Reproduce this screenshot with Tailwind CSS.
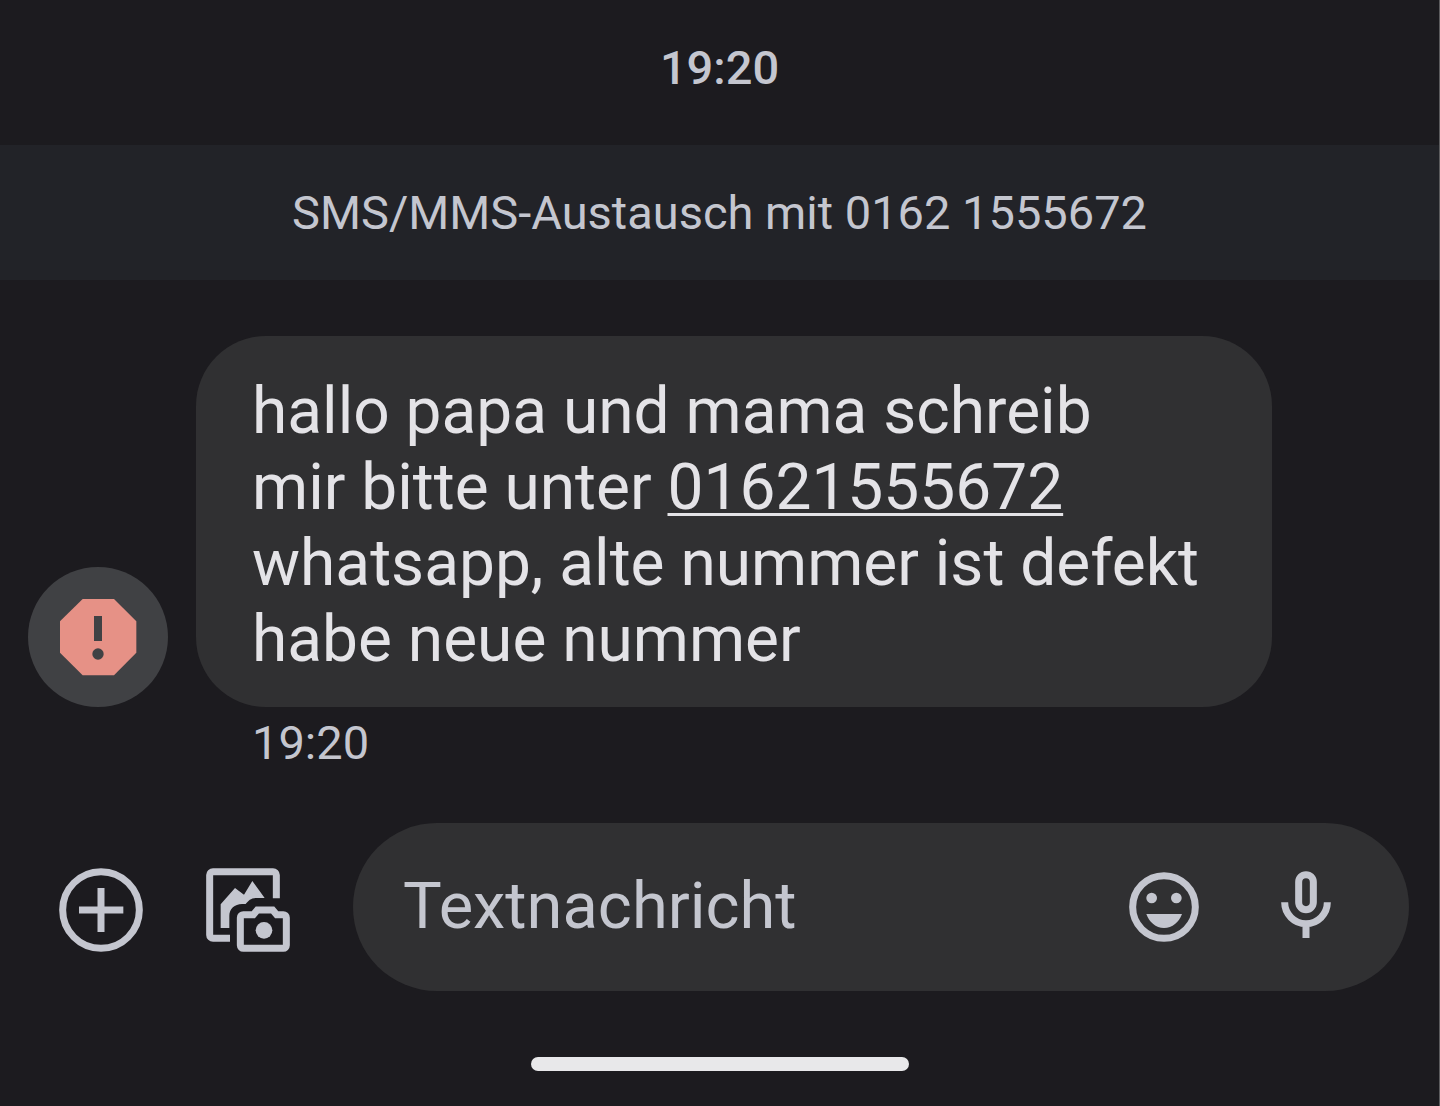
<!DOCTYPE html>
<html lang="de">
<head>
  <meta charset="UTF-8" />
  <meta name="viewport" content="width=device-width, initial-scale=1.0"/>
  <title>Nachrichten</title>
  <script src="https://cdn.jsdelivr.net/npm/@tailwindcss/browser@4"></script>
</head>
<body class="bg-[#1c1b1f] font-['Roboto',sans-serif] text-[#c4c6cf]">

  <div class="min-h-screen flex flex-col border-r border-[#5c5c5e]">

    <header class="pt-10 pb-[49px] text-center">
      <time class="block text-[47px] leading-[56px] font-medium">19:20</time>
    </header>

    <p class="bg-[#222328] pt-10 pb-[39px] text-center text-[47px] leading-[56px]">SMS/MMS-Austausch mit 0162 1555672</p>

    <!-- Conversation -->
    <main class="pt-14 pl-7 pr-[167px]">
      <div class="flex items-end gap-7">
        <div class="size-[140px] shrink-0 rounded-full bg-[#404144] flex items-center justify-center">
          <svg class="size-[84px]" viewBox="0 0 252 252" role="img" aria-label="Spam">
            <path fill="#e69186" d="M80 12H174L241 79V173L174 241H80L12 173V79Z"/>
            <path fill="#404144" d="M114 63h24v75h-24z"/>
            <circle fill="#404144" cx="126" cy="177" r="17"/>
          </svg>
        </div>
        <div class="grow rounded-[70px] bg-[#303032] pt-[38px] pb-[29px] px-14">
          <p class="text-[64px] leading-[76px] text-[#e4e3e7]">
            hallo papa und mama schreib<br>
            mir bitte unter <a href="tel:01621555672" class="underline decoration-3 underline-offset-4 [text-decoration-skip-ink:none]">01621555672</a><br>
            whatsapp, alte nummer ist defekt<br>
            habe neue nummer
          </p>
        </div>
      </div>
      <time class="block pl-[224px] pt-2 text-[47px] leading-[56px]">19:20</time>
    </main>

    <!-- Compose bar -->
    <form class="mt-auto pl-[59px] pr-[30px] flex items-center">
      <button type="button" aria-label="Anhang" class="mt-1.5 mr-[63px] shrink-0">
        <svg class="size-[84px]" viewBox="0 0 252 252" fill="none" stroke="currentColor" stroke-width="21">
          <circle cx="126" cy="126" r="115"/>
          <path d="M60 126H193M126 60V192"/>
        </svg>
      </button>
      <button type="button" aria-label="Galerie und Kamera" class="mt-1.5 mr-[63px] shrink-0">
        <svg class="size-[84px]" viewBox="0 0 252 252" fill="none" stroke="currentColor" stroke-width="21">
          <path d="M211 91V21a10 10 0 0 0-10-10H21a10 10 0 0 0-10 10v180a10 10 0 0 0 10 10h51"/>
          <path fill="currentColor" stroke="none" d="M44 109L87 60L114 80L139 39L176 90H150C133 91 128 98 119 108H108C86 109 70 122 70 144V180H44Z"/>
          <path d="M112 140H142L154 126H200L212 140H232a9 9 0 0 1 9 9V232a9 9 0 0 1-9 9H112a9 9 0 0 1-9-9V149a9 9 0 0 1 9-9Z"/>
          <circle fill="currentColor" stroke="none" cx="174" cy="187" r="25"/>
        </svg>
      </button>
      <div class="grow min-w-0 flex items-center rounded-full bg-[#303032] py-[42px] pl-[50px] pr-[61px]">
        <input type="text" aria-label="Textnachricht" placeholder="Textnachricht" class="grow min-w-0 h-[84px] text-[65px] outline-none placeholder:text-[#c4c6cf]">
        <button type="button" aria-label="Emoji" class="mr-[58px] shrink-0">
          <svg class="size-[84px]" viewBox="0 0 252 252" fill="currentColor">
            <circle cx="126" cy="126" r="94" fill="none" stroke="currentColor" stroke-width="21"/>
            <circle cx="89" cy="99" r="16"/>
            <circle cx="163" cy="99" r="16"/>
            <path d="M73 147H180C171 172 151 189 126 189S82 172 73 147Z"/>
          </svg>
        </button>
        <button type="button" aria-label="Spracheingabe" class="shrink-0">
          <svg class="size-[84px]" viewBox="0 0 252 252" fill="none" stroke="currentColor" stroke-width="21">
            <rect x="104" y="29" width="44" height="105" rx="22"/>
            <path d="M62 112a64 64 0 0 0 128 0M126 175V219"/>
          </svg>
        </button>
      </div>
    </form>

    <!-- Home indicator -->
    <div class="mt-[66px] mb-[35px] mx-auto w-[378px] h-3.5 rounded-full bg-[#e8e8ea]"></div>

  </div>

</body>
</html>
